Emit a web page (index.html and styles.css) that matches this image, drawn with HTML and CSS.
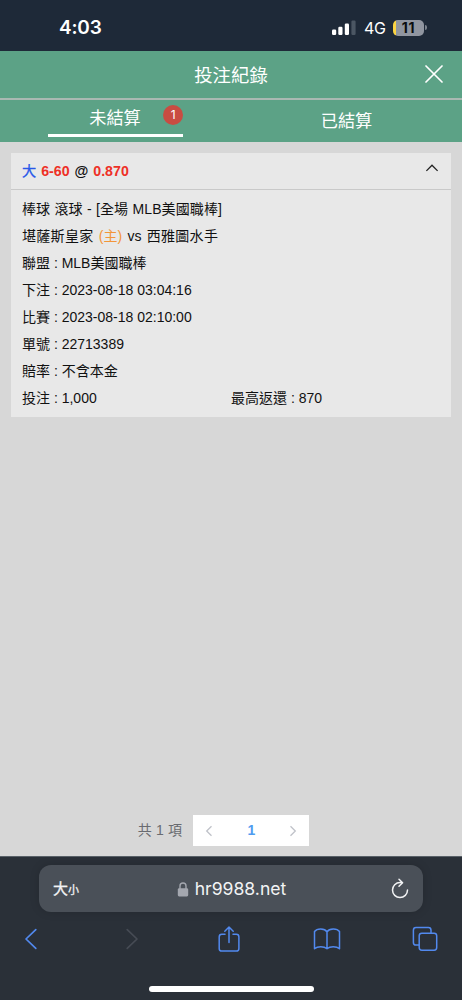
FILE: index.html
```html
<!DOCTYPE html>
<html lang="zh-Hant">
<head>
<meta charset="utf-8">
<meta name="viewport" content="width=device-width, initial-scale=1">
<title>投注紀錄</title>
<link rel="stylesheet" href="styles.css">
</head>
<body>
<div class="phone">
  <div class="status">
    <span class="clock">4:03</span>
    <div class="indicators">
      <svg class="signal" width="24" height="16" viewBox="0 0 24 16">
        <rect x="0" y="9.5" width="4.2" height="5.5" rx="1.2" fill="#fff"/>
        <rect x="6.3" y="6.8" width="4.2" height="8.2" rx="1.2" fill="#fff"/>
        <rect x="12.8" y="3.5" width="4.2" height="11.5" rx="1.2" fill="#fff"/>
        <rect x="19.4" y="0.5" width="4.2" height="14.5" rx="1.2" fill="#4b5663"/>
      </svg>
      <span class="network">4G</span>
      <div class="battery"><span class="level">11</span></div>
      <span class="nub"></span>
    </div>
  </div>

  <header class="titlebar">
    <h1 class="title">投注紀錄</h1>
    <svg class="close" width="18" height="18" viewBox="0 0 18 18"><path d="M1 1L17 17M17 1L1 17" fill="none" stroke="#fff" stroke-width="1.7" stroke-linecap="round"/></svg>
  </header>
  <nav class="tabs">
    <div class="tab active"><span class="tab-label">未結算<span class="badge">1</span></span></div>
    <div class="tab"><span class="tab-label">已結算</span></div>
  </nav>

  <main class="content">
    <section class="card">
      <div class="card-head">
        <div class="pick"><span class="side">大</span> <span class="odds">6-60</span> @ <span class="odds">0.870</span></div>
        <svg class="chevron" width="14" height="10" viewBox="0 0 14 10"><path d="M1.4 7.9L7 2.2L12.6 7.9" fill="none" stroke="#222" stroke-width="1.3"/></svg>
      </div>
      <div class="card-body">
        <div class="row spaced">棒球 滾球 - [全場 MLB美國職棒]</div>
        <div class="row teams"><span class="wide">堪薩斯皇家</span> <span class="home">(主)</span> vs <span class="wide">西雅圖水手</span></div>
        <div class="row">聯盟 : MLB美國職棒</div>
        <div class="row">下注 : 2023-08-18 03:04:16</div>
        <div class="row">比賽 : 2023-08-18 02:10:00</div>
        <div class="row">單號 : 22713389</div>
        <div class="row">賠率 : 不含本金</div>
        <div class="row split"><span>投注 : 1,000</span><span>最高返還 : 870</span></div>
      </div>
    </section>
    <div class="pagination">
      <span class="total">共 1 項</span>
      <div class="pager">
        <svg width="8" height="12" viewBox="0 0 8 12"><path d="M6.5 1.2L1.7 6L6.5 10.8" fill="none" stroke="#bfc2c9" stroke-width="1.3"/></svg>
        <span class="page">1</span>
        <svg width="8" height="12" viewBox="0 0 8 12"><path d="M1.5 1.2L6.3 6L1.5 10.8" fill="none" stroke="#bfc2c9" stroke-width="1.3"/></svg>
      </div>
    </div>
  </main>

  <footer class="browser">
    <div class="address">
      <span class="size"><span class="size-big">大</span><span class="size-small">小</span></span>
      <div class="url">
        <svg width="12" height="15" viewBox="0 0 12 15"><path d="M3 7V4a3 3 0 0 1 6 0V7" fill="none" stroke="#a4a7af" stroke-width="1.4"/><rect x="0.8" y="6.2" width="10.4" height="8.2" rx="1.3" fill="#a4a7af"/></svg>
        <span>hr9988.net</span>
      </div>
      <svg class="reload" width="18" height="21" viewBox="0 0 18 21" fill="none" stroke="#f2f3f4" stroke-width="1.5" stroke-linecap="round" stroke-linejoin="round"><path d="M11.4 4.6H9A7.5 7.5 0 1 0 16.5 12.1M8 1.2L11.6 4.7L8 8.3"/></svg>
    </div>
    <div class="toolbar">
      <svg class="back" width="14" height="22" viewBox="0 0 14 22"><path d="M11.8 1.6L2 11L11.8 20.4" fill="none" stroke="#5289ee" stroke-width="1.7" stroke-linecap="round" stroke-linejoin="round"/></svg>
      <svg class="forward" width="14" height="22" viewBox="0 0 14 22"><path d="M2.2 1.6L12 11L2.2 20.4" fill="none" stroke="#464b54" stroke-width="1.7" stroke-linecap="round" stroke-linejoin="round"/></svg>
      <svg class="share" width="24" height="28" viewBox="0 0 24 28" fill="none" stroke="#5289ee" stroke-width="1.5" stroke-linecap="round" stroke-linejoin="round"><path d="M8 9.3H4.8Q2.2 9.3 2.2 11.9V23.4Q2.2 26 4.8 26H19.3Q21.9 26 21.9 23.4V11.9Q21.9 9.3 19.3 9.3H16M12 17.4V2.2M7.8 6.2L12 2L16.2 6.2"/></svg>
      <svg width="28" height="24" viewBox="0 0 28 24" fill="none" stroke="#5289ee" stroke-width="1.5" stroke-linecap="round" stroke-linejoin="round"><path d="M14 4.8C11.6 1 4 1 1.5 4.5V21.8C4.5 19.2 11 19.2 14 21.8C17 19.2 23.5 19.2 26.5 21.8V4.5C24 1 16.4 1 14 4.8V21.8"/></svg>
      <svg width="26" height="26" viewBox="0 0 26 26" fill="none" stroke="#5289ee" stroke-width="1.5" stroke-linejoin="round"><rect x="7.2" y="7.2" width="17.5" height="17" rx="2.6"/><path d="M7.2 19H4Q1.4 19 1.4 16.4V4.2Q1.4 1.6 4 1.6H16.4Q19 1.6 19 4.2V7.2"/></svg>
    </div>
    <div class="home-indicator"></div>
  </footer>
</div>
</body>
</html>
```

FILE: styles.css
```css
* { box-sizing: border-box; }
body {
  margin: 0;
  font-family: "Liberation Sans", "Noto Sans CJK TC", sans-serif;
}
svg { display: block; flex: none; }
.phone {
  width: 462px;
  height: 1000px;
  display: flex;
  flex-direction: column;
  overflow: hidden;
  background: #d7d7d7;
}
.status {
  height: 51px;
  flex: none;
  display: flex;
  justify-content: space-between;
  align-items: center;
  padding: 4px 35px 0 59px;
  background: #1e2938;
  color: #fff;
  font-family: Inter, sans-serif;
}
.clock { font-size: 19px; font-weight: 600; line-height: 24px; letter-spacing: -0.2px; }
.indicators { display: flex; align-items: center; }
.network { font-size: 16px; margin-left: 8px; width: 22px; letter-spacing: -0.3px; }
.battery {
  width: 31px;
  height: 16px;
  margin-left: 7px;
  border-radius: 5px;
  background: linear-gradient(to right, #fbd443 0 3.2px, #9095a0 3.2px);
  display: flex;
  justify-content: center;
  align-items: center;
}
.level { color: #0b0d10; font-size: 14px; font-weight: 700; line-height: 16px; letter-spacing: 0.6px; }
.nub { width: 2px; height: 5px; background: #7d838e; border-radius: 0 2px 2px 0; margin-left: 1px; }

.titlebar {
  height: 49px;
  flex: none;
  display: grid;
  grid-template-columns: 1fr auto 1fr;
  align-items: center;
  background: #5ca286;
  border-bottom: 2px solid #a9b9b2;
  color: #fff;
}
.title { grid-column: 2; margin: 2px 0 0; font-size: 18.4px; font-weight: 400; line-height: 26px; }
.close { justify-self: end; margin: 0 19px 1px 0; }
.tabs {
  height: 42px;
  flex: none;
  display: grid;
  grid-template-columns: 1fr 1fr;
  background: #5ca286;
  color: #fff;
}
.tab { display: flex; justify-content: center; padding-top: 8px; }
.tab-label { font-size: 17.2px; line-height: 26px; position: relative; }
.active { width: 135px; height: 37px; margin-left: 48px; border-bottom: 3px solid #fff; padding: 5px 1px 0 0; }
.badge {
  position: absolute;
  left: 74px;
  top: 0;
  width: 20px;
  height: 20px;
  border-radius: 50%;
  background: #c94c42;
  font-size: 12px;
  line-height: 20px;
  text-align: center;
  font-family: Inter, sans-serif;
}

.content {
  flex: 1;
  display: flex;
  flex-direction: column;
  justify-content: space-between;
  padding: 11px 11px 10px;
}
.card { background: #e8e8e8; color: #111; font-size: 14px; }
.card-head {
  height: 37px;
  display: flex;
  justify-content: space-between;
  padding: 5px 12px 0 11px;
  border-bottom: 1px solid #c9c9c9;
}
.pick { font-weight: 700; font-size: 14.2px; line-height: 26px; word-spacing: 1px; }
.side { color: #2858e8; font-weight: 400; -webkit-text-stroke: 0.3px #2858e8; }
.odds { color: #ee3026; }
.chevron { margin-top: 5px; }
.card-body { padding: 6px 11px 5px; }
.row { height: 27px; line-height: 27px; white-space: nowrap; }
.spaced { letter-spacing: 0.1px; word-spacing: 0.3px; }
.teams { word-spacing: 1.4px; }
.wide { letter-spacing: 0.3px; }
.home { color: #f39539; }
.split { display: grid; grid-template-columns: 1fr 1fr; }
.pagination { display: flex; justify-content: center; align-items: center; gap: 11px; padding-right: 15px; }
.total { font-size: 14px; line-height: 28px; padding-bottom: 2px; color: #696b70; letter-spacing: 0.2px; }
.pager {
  width: 116px;
  height: 31px;
  background: #fff;
  display: flex;
  justify-content: space-between;
  align-items: center;
  padding: 0 12px;
}
.page { color: #509cf0; font-weight: 700; font-size: 14px; line-height: 28px; padding-bottom: 2px; }

.browser { height: 144px; flex: none; background: #2a3038; border-top: 1px solid #596168; padding-top: 8px; }
.address {
  height: 47px;
  margin: 0 39px;
  border-radius: 12px;
  background: #4a5058;
  box-shadow: 0 0 10px rgba(0, 0, 0, 0.15);
  color: #f2f3f4;
  display: grid;
  grid-template-columns: 1fr auto 1fr;
  align-items: center;
  padding: 0 14px;
}
.size { display: flex; align-items: baseline; font-weight: 400; line-height: 24px; padding-top: 2px; -webkit-text-stroke: 0.3px #f2f3f4; }
.size-big { font-size: 15px; }
.size-small { font-size: 11px; }
.url { display: flex; align-items: center; gap: 6px; font-family: Inter, sans-serif; font-size: 17.6px; line-height: 24px; padding: 1px 0 0 1px; }
.reload { justify-self: end; }
.toolbar { height: 54px; display: flex; align-items: center; gap: 71px; padding-left: 24px; }
.back { margin-right: 16px; }
.forward { margin-right: 7px; }
.share { margin-right: 1px; }
.home-indicator { width: 165px; height: 6px; border-radius: 3px; background: #fff; margin: 20px auto 0; }
```
